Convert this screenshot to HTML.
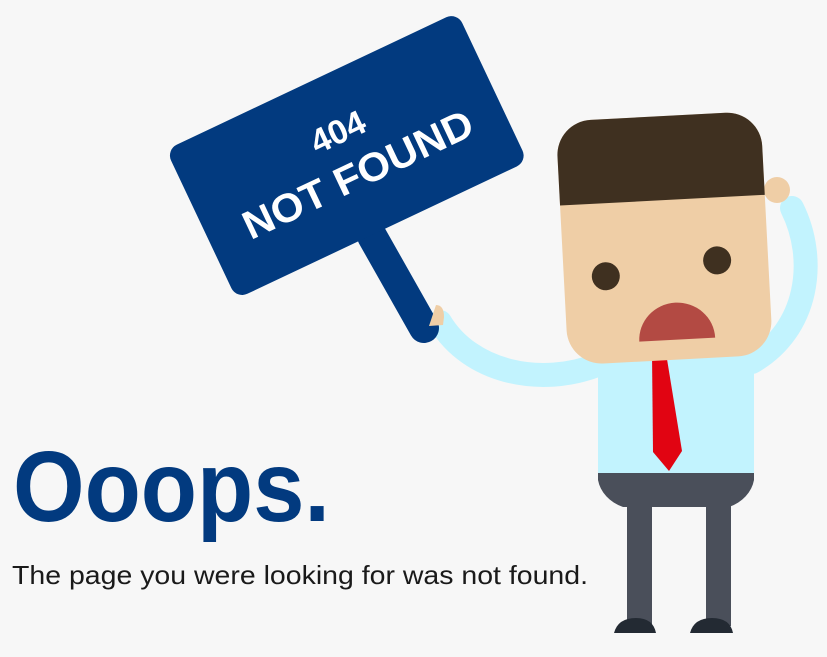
<!DOCTYPE html>
<html><head><meta charset="utf-8"><style>
html,body{margin:0;padding:0;background:#f7f7f7;width:827px;height:657px;overflow:hidden}
svg{display:block}
</style></head><body>
<svg width="827" height="657" viewBox="0 0 827 657" xmlns="http://www.w3.org/2000/svg">
<rect width="827" height="657" fill="#f7f7f7"/>
<path d="M440 322 C470 372 540 388 600 364" fill="none" stroke="#c2f3fe" stroke-width="24" stroke-linecap="round"/>
<path d="M752 362 C808 330 818 260 792 208" fill="none" stroke="#c2f3fe" stroke-width="24" stroke-linecap="round"/>
<circle cx="777" cy="190" r="13" fill="#efcea6"/>
<line x1="372" y1="236" x2="424" y2="328" stroke="#023a7f" stroke-width="30" stroke-linecap="round"/>
<path d="M436 305 q8 0 8 12 l-1 8 l-14 1 z" fill="#efcea6"/>
<g transform="translate(347,156) rotate(-25.3)">
<rect x="-161" y="-83" width="322" height="165" rx="12" fill="#023a7f"/>
<text x="2" y="-14" text-anchor="middle" font-family="Liberation Sans, sans-serif" font-weight="bold" font-size="34" fill="#fff">404</text>
<text x="2" y="35" text-anchor="middle" font-family="Liberation Sans, sans-serif" font-weight="bold" font-size="40" fill="#fff" textLength="250" lengthAdjust="spacingAndGlyphs">NOT FOUND</text>
</g>
<rect x="598" y="350" width="156" height="130" fill="#c2f3fe"/>
<path d="M598 473 H754 V480 A40 35 0 0 1 729 507 H623 A40 35 0 0 1 598 480 Z" fill="#4a4f5a"/>
<rect x="627" y="500" width="25" height="126" fill="#4a4f5a"/>
<rect x="706" y="500" width="25" height="126" fill="#4a4f5a"/>
<path d="M614 633 Q618 618 636 618 Q653 618 656 633 Z" fill="#232a33"/>
<path d="M690 633 Q694 618 712 618 Q730 618 733 633 Z" fill="#232a33"/>
<path d="M652 353 L666 353 L682 451 L669 471 L653 452 Z" fill="#e10412"/>
<g transform="rotate(-3 667 240)">
<rect x="562" y="116" width="205" height="244" rx="35" fill="#efcea6"/>
<path d="M562 200 V151 A35 35 0 0 1 597 116 H732 A35 35 0 0 1 767 151 V200 Z" fill="#3f3020"/>
<circle cx="604" cy="273" r="14" fill="#3f3020"/>
<circle cx="716" cy="263" r="14" fill="#3f3020"/>
<path d="M634 340 A38 37 0 0 1 710 340 Z" fill="#b34a43"/>
</g>
<text x="13" y="521" font-family="Liberation Sans, sans-serif" font-weight="bold" font-size="100" fill="#023a7f" textLength="317" lengthAdjust="spacingAndGlyphs">Ooops.</text>
<text x="12" y="584" font-family="Liberation Sans, sans-serif" font-size="26" fill="#1a1a1a" textLength="576" lengthAdjust="spacingAndGlyphs">The page you were looking for was not found.</text>
</svg>
</body></html>
